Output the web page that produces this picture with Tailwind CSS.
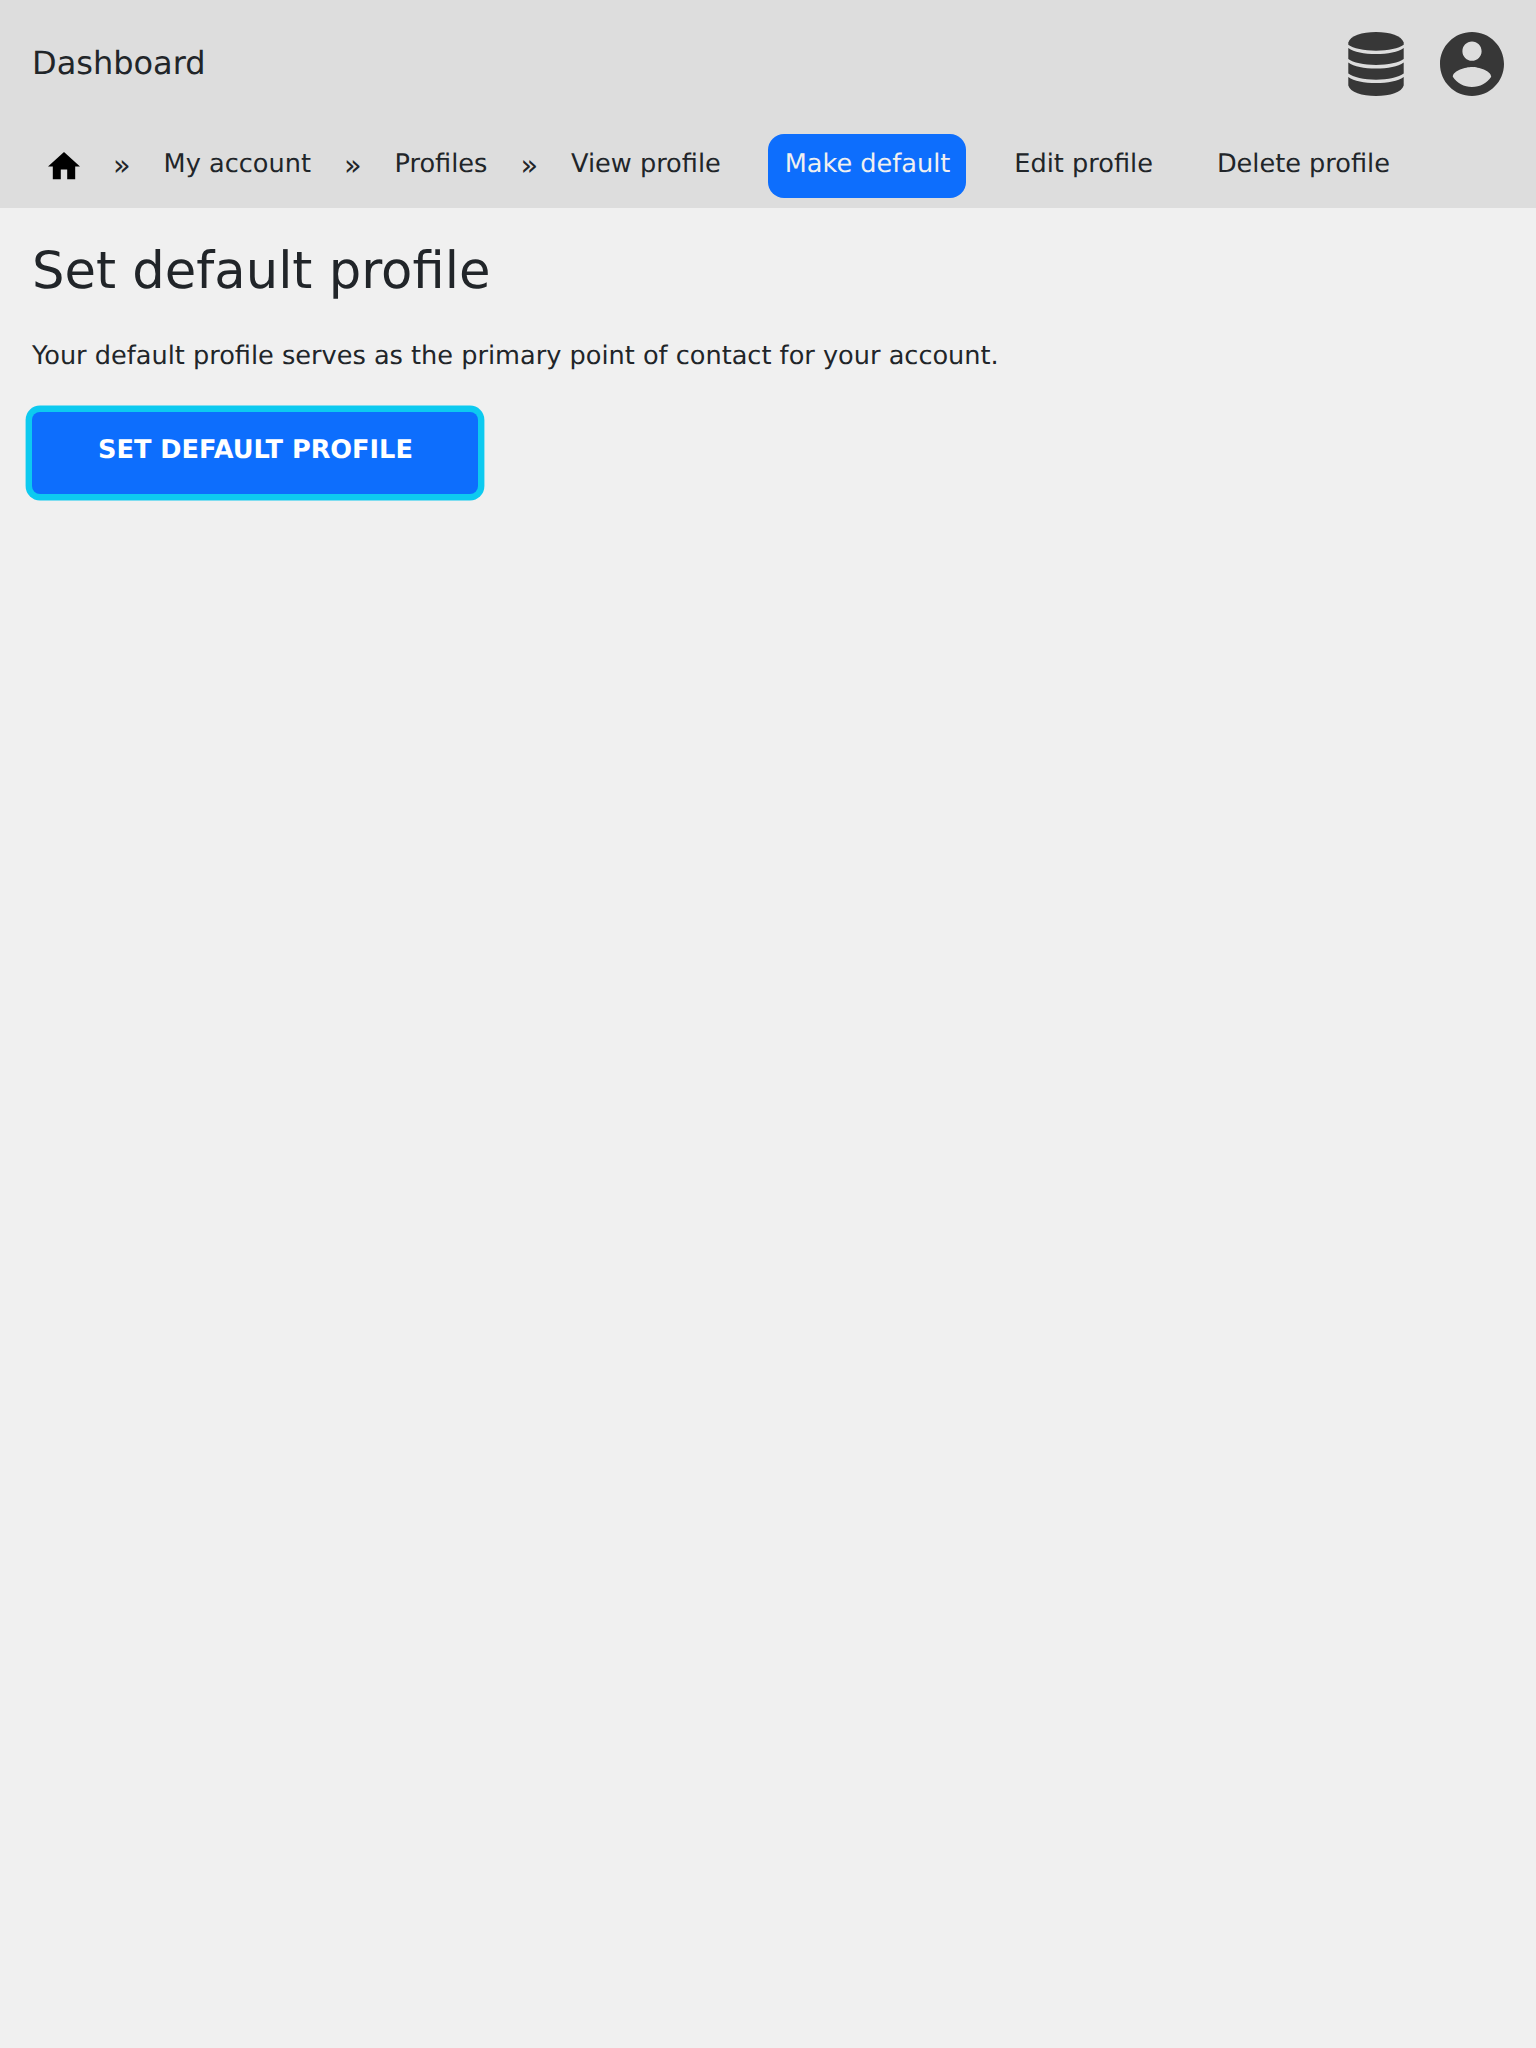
<!DOCTYPE html>
<html lang="en">
<head>
<meta charset="utf-8">
<title>Set default profile</title>
<script src="https://cdn.jsdelivr.net/npm/@tailwindcss/browser@4"></script>
</head>
<body class="min-h-screen bg-[#f0f0f0] font-['DejaVu_Sans',sans-serif] text-[25.6px] leading-[38.4px] text-[#212529] [text-rendering:geometricPrecision]">
<header class="h-52 bg-[#ddd]">
  <div class="flex h-32 items-center justify-between px-8">
    <a class="pb-0.5 text-[32px] leading-[48px]">Dashboard</a>
    <div class="flex gap-9">
      <svg class="h-16 w-14" viewBox="0 0 56 64" fill="#373737">
        <path d="M.3 10.500C2 4 14 0 28 0s25.700 4 27.700 10.500v2.300C51 16.500 40 18.700 28 18.700S5 16.500.3 12.800z"/>
        <path d="M.3 16C6 20 16 22 28 22s22-2 27.700-6v11C51 30.700 40 32.900 28 32.900S5 30.700.3 27z"/>
        <path d="M.3 30.500C6 34.500 16 36.500 28 36.500s22-2 27.700-6v11C51 45.200 40 47.700 28 47.700S5 45.200.3 41.500z"/>
        <path d="M.3 45C6 49 16 51 28 51s22-2 27.700-6v8.500C54 60 42 64 28 64S2 60 .3 53.500z"/>
      </svg>
      <svg class="size-16" viewBox="2 2 20 20" fill="#373737">
        <path d="M12 2C6.480 2 2 6.480 2 12s4.480 10 10 10 10-4.480 10-10S17.520 2 12 2zm0 3c1.660 0 3 1.340 3 3s-1.340 3-3 3-3-1.340-3-3 1.340-3 3-3zm0 14.200c-2.500 0-4.710-1.280-6-3.220.030-1.990 4-3.080 6-3.080 1.990 0 5.970 1.090 6 3.080-1.290 1.940-3.500 3.220-6 3.220z"/>
      </svg>
    </div>
  </div>
  <nav class="flex h-20 items-start px-8 pt-1.5 whitespace-nowrap">
    <a class="flex h-16 w-16 justify-center pt-[18.400px]"><svg class="h-[27.200px] w-8" viewBox="2 3 20 17"><path d="M10 20v-6h4v6h5v-8h3L12 3 2 12h3v8z"/></svg></a>
    <span class="w-[51.600px] pt-3 text-center text-[28.800px]">»</span>
    <a class="h-16 px-4 pt-[11px]">My account</a>
    <span class="w-[51.600px] pt-3 text-center text-[28.800px]">»</span>
    <a class="h-16 px-4 pt-[11px]">Profiles</a>
    <span class="w-[51.600px] pt-3 text-center text-[28.800px]">»</span>
    <a class="h-16 px-4 pt-[11px]">View profile</a>
    <a class="ml-[31.700px] h-16 rounded-2xl bg-[#0d6efd] pr-4 pl-[16.300px] pt-[11px] text-[#f0f0f0]">Make default</a>
    <a class="ml-8 h-16 px-4 pt-[11px]">Edit profile</a>
    <a class="ml-8 h-16 px-4 pt-[11px]">Delete profile</a>
  </nav>
</header>
<main class="flex flex-col items-start px-8 pt-8">
  <h1 class="text-[51.200px] leading-[62px]">Set default profile</h1>
  <p class="mt-[35px]">Your default profile serves as the primary point of contact for your account.</p>
  <button class="mt-[36.600px] h-[82px] w-[446px] rounded-lg bg-[#0d6efd] pb-1.5 pl-px font-bold text-white shadow-[0_0_0_6.4px_#0dcaf0] [text-rendering:geometricPrecision]">SET DEFAULT PROFILE</button>
</main>
</body>
</html>
